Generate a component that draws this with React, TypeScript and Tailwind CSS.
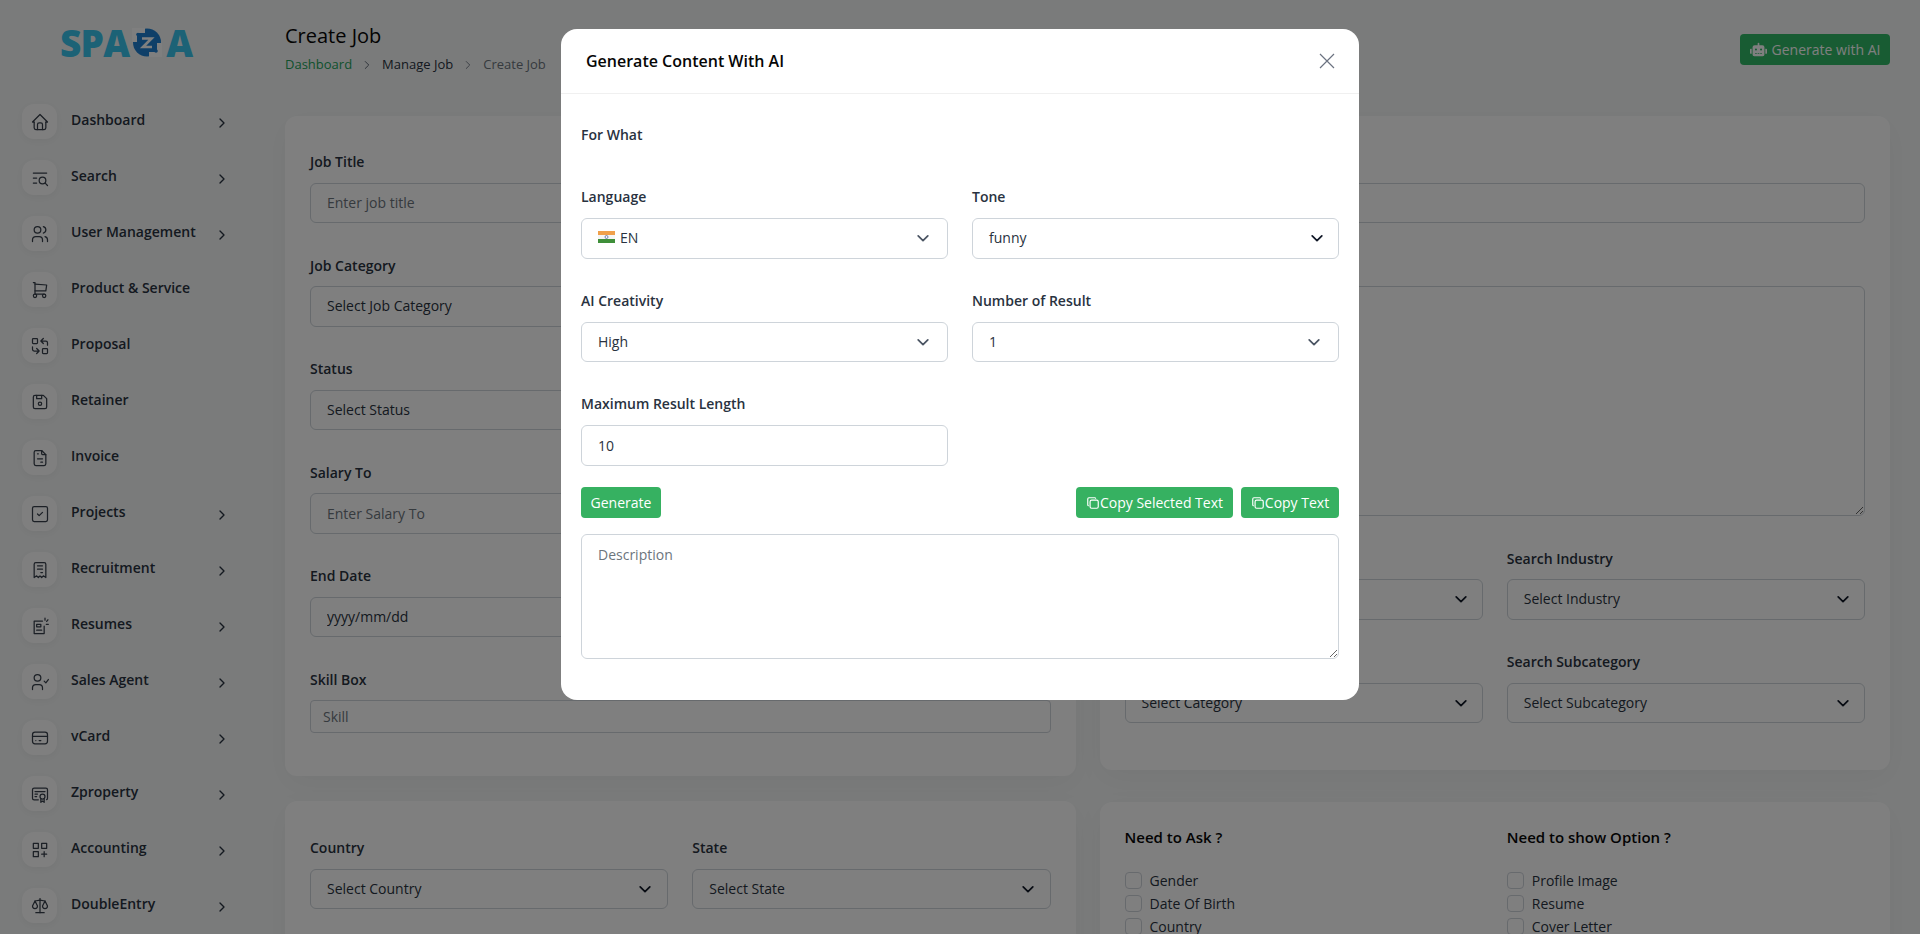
import React from "react";
import { ChevronRight } from "lucide-react";
import { FaRobot } from "react-icons/fa";
import {
  TbHome, TbListSearch, TbUsers, TbShoppingCart, TbReplace, TbDeviceFloppy, TbFileInvoice,
  TbSquareCheck, TbReceipt, TbCreditCard, TbCertificate, TbCategoryPlus, TbScale, TbCopy,
} from "react-icons/tb";

function ResumeIcon() {
  return (
    <svg width={20} height={20} viewBox="0 0 24 24" fill="none" stroke="currentColor" strokeWidth="1.500" strokeLinecap="round" strokeLinejoin="round">
      <path d="M15 6H5v15h12v-9" />
      <path d="M8 10h5v3H8zM8 17h6" />
      <path d="M18 2.500v2.500M21.500 4.500 20 6.500M22 10h-2.500" />
    </svg>
  );
}

function AgentIcon() {
  return (
    <svg width={20} height={20} viewBox="0 0 24 24" fill="none" stroke="currentColor" strokeWidth="1.500" strokeLinecap="round" strokeLinejoin="round">
      <circle cx="9" cy="7" r="4" />
      <path d="M3 21v-2a4 4 0 0 1 4-4h4a4 4 0 0 1 4 4v2" />
      <path d="m17 11 2 2 3-4" />
    </svg>
  );
}

const s = { size: 20, strokeWidth: 1.5 };

const nav: { label: string; icon: React.ReactNode; arrow: boolean }[] = [
  { label: "Dashboard", icon: <TbHome {...s} />, arrow: true },
  { label: "Search", icon: <TbListSearch {...s} />, arrow: true },
  { label: "User Management", icon: <TbUsers {...s} />, arrow: true },
  { label: "Product & Service", icon: <TbShoppingCart {...s} />, arrow: false },
  { label: "Proposal", icon: <TbReplace {...s} />, arrow: false },
  { label: "Retainer", icon: <TbDeviceFloppy {...s} />, arrow: false },
  { label: "Invoice", icon: <TbFileInvoice {...s} />, arrow: false },
  { label: "Projects", icon: <TbSquareCheck {...s} />, arrow: true },
  { label: "Recruitment", icon: <TbReceipt {...s} />, arrow: true },
  { label: "Resumes", icon: <ResumeIcon />, arrow: true },
  { label: "Sales Agent", icon: <AgentIcon />, arrow: true },
  { label: "vCard", icon: <TbCreditCard {...s} />, arrow: true },
  { label: "Zproperty", icon: <TbCertificate {...s} />, arrow: true },
  { label: "Accounting", icon: <TbCategoryPlus {...s} />, arrow: true },
  { label: "DoubleEntry", icon: <TbScale {...s} />, arrow: true },
];

function Label({ children, modal }: { children?: React.ReactNode; modal?: boolean }) {
  return (
    <div className={`h-[21px] text-sm leading-[21px] font-semibold text-[#293240] ${modal ? "mb-[11px]" : "mb-[10.5px]"}`}>
      {children}
    </div>
  );
}

function Chevron({ className }: { className: string }) {
  return (
    <svg className={`absolute top-1/2 -translate-y-1/2 ${className}`} width="14" height="14" viewBox="0 0 16 16" fill="none" stroke="currentColor" strokeWidth="2" strokeLinecap="round" strokeLinejoin="round">
      <path d="M2.500 5.500 8 11l5.500-5.500" />
    </svg>
  );
}

function SelectBox({ children, chevron = "right-[18px] text-[#343a40]" }: { children?: React.ReactNode; chevron?: string }) {
  return (
    <div className="relative flex h-[40.5px] items-center rounded-md border border-[#ced4da] bg-white px-4 text-sm text-[#293240]">
      {children}
      <Chevron className={chevron} />
    </div>
  );
}

function TextInput({ placeholder, value }: { placeholder?: string; value?: string }) {
  return (
    <input
      readOnly
      placeholder={placeholder}
      value={value ?? ""}
      className="block h-[40.5px] w-full rounded-md border border-[#ced4da] bg-white px-4 text-sm text-[#293240] outline-none placeholder:text-[#6c757d]"
    />
  );
}

function Check({ label }: { label: string }) {
  return (
    <div className="flex h-[23px] items-center">
      <span className="h-[17px] w-[17px] rounded-[4px] border border-[#ced4da] bg-white" />
      <span className="ml-2 text-sm font-medium text-[#293240]">{label}</span>
    </div>
  );
}

function Logo() {
  return (
    <div className="ml-[60px] flex h-[28px] items-center text-[37px] font-extrabold leading-none tracking-[-0.8px] text-[#38c4ec]">
      <span>SPA</span>
      <svg className="mx-[3px]" width="30" height="29" viewBox="0 0 30 29">
        <circle cx="15" cy="14.500" r="14" fill="#1f7fd0" />
        <path d="M0 0h13v5H5v9H0z" fill="#fff" />
        <path d="M30 29H17v-5h8v-9h5z" fill="#fff" />
        <path d="M10 10.500h9.500L11 19h9" fill="none" stroke="#fff" strokeWidth="2.600" />
        <path d="M6 6.500h9M15 23h9" stroke="#1f7fd0" strokeWidth="1.300" fill="none" />
        <circle cx="6" cy="6.500" r="1.800" fill="#1f7fd0" />
        <circle cx="24" cy="23" r="1.800" fill="#1f7fd0" />
      </svg>
      <span className="ml-[1px]">A</span>
    </div>
  );
}

function Sidebar() {
  return (
    <aside className="w-[285px] shrink-0 pt-[28px]">
      <Logo />
      <nav className="mt-[48px] flex flex-col gap-[21px]">
        {nav.map((n) => (
          <div key={n.label} className="ml-[22px] flex h-[35px] text-[#293240]">
            <span className="flex h-[35px] w-[35px] shrink-0 items-center justify-center rounded-xl bg-white text-[#38404c] shadow-[0_2px_10px_rgba(0,0,0,0.05)]">{n.icon}</span>
            <span className="ml-[14px] mt-[5px] h-[21px] w-[143px] text-sm font-semibold leading-[21px]">{n.label}</span>
            {n.arrow && <ChevronRight size={16} className="mt-[11px] text-[#293240]" />}
          </div>
        ))}
      </nav>
    </aside>
  );
}

function Modal() {
  const copy = <TbCopy size={14} className="shrink-0" />;
  return (
    <div className="fixed inset-0 flex items-start justify-center bg-black/50 pt-[29px]">
      <div className="h-[671px] w-[798px] overflow-hidden rounded-2xl bg-white">
        <div className="flex h-[65px] items-center justify-between border-b border-[#f0f0f0] pl-[25px] pr-[24px]">
          <h5 className="text-base font-semibold text-[#060606]">Generate Content With AI</h5>
          <svg width="16" height="16" viewBox="0 0 16 16" stroke="#6b7280" strokeWidth="1.200" fill="none">
            <path d="M1 1l14 14M15 1 1 15" />
          </svg>
        </div>
        <div className="px-5 pt-[30px]">
          <div className="mb-[41px] h-[21px] text-sm font-semibold leading-[21px] text-[#293240]">For What</div>
          <div className="grid grid-cols-2 gap-x-6 gap-y-[31px]">
            <div>
              <Label modal>Language</Label>
              <SelectBox chevron="right-[17px] text-[#4b5563]">
                <svg className="mr-[5px] -mt-[2px]" width="17" height="12" viewBox="0 0 17 12">
                  <rect width="17" height="4" fill="#f0a04b" />
                  <rect y="4" width="17" height="4" fill="#f5f5f5" />
                  <rect y="8" width="17" height="4" fill="#3f8f3a" />
                  <circle cx="8.500" cy="6" r="1.500" fill="none" stroke="#2b3f8c" strokeWidth="0.600" />
                </svg>
                EN
              </SelectBox>
            </div>
            <div>
              <Label modal>Tone</Label>
              <SelectBox chevron="right-[14px] text-[#111827]">funny</SelectBox>
            </div>
            <div>
              <Label modal>AI Creativity</Label>
              <SelectBox chevron="right-[17px] text-[#4b5563]">High</SelectBox>
            </div>
            <div>
              <Label modal>Number of Result</Label>
              <SelectBox chevron="right-[17px] text-[#4b5563]">1</SelectBox>
            </div>
            <div>
              <Label modal>Maximum Result Length</Label>
              <TextInput value="10" />
            </div>
          </div>
          <div className="mt-[21.5px] flex h-[31px] items-stretch text-sm font-medium text-white">
            <button className="w-[80px] rounded bg-[#36b161]">Generate</button>
            <div className="flex-1" />
            <button className="flex w-[157px] items-center justify-center rounded bg-[#36b161]">{copy}Copy Selected Text</button>
            <button className="ml-2 flex w-[98px] items-center justify-center rounded bg-[#36b161]">{copy}Copy Text</button>
          </div>
          <textarea
            readOnly
            placeholder="Description"
            className="mt-[16px] block h-[125px] w-full rounded-md border border-[#ced4da] px-4 py-[10px] text-sm outline-none placeholder:text-[#6c757d]"
          />
        </div>
      </div>
    </div>
  );
}

export default function App() {
  return (
    <div className="relative flex h-[934px] overflow-hidden bg-[#f5f7f7] font-['Open_Sans',sans-serif]">
      <Sidebar />
      <main className="min-w-0 flex-1 pr-[30px] pt-[21px]">
        <header className="flex h-[95px] items-start justify-between">
          <div>
            <h1 className="text-xl font-medium leading-[30px] text-[#060606]">Create Job</h1>
            <div className="mt-[3px] flex h-[21px] items-center text-[13px] leading-[21px]">
              <span className="text-[#22a35a]">Dashboard</span>
              <ChevronRight size={14} strokeWidth={1.5} className="mx-[8px] text-[#4b5563]" />
              <span className="text-[#293240]">Manage Job</span>
              <ChevronRight size={14} strokeWidth={1.5} className="mx-[8px] text-[#6b7280]" />
              <span className="text-[#6c757d]">Create Job</span>
            </div>
          </div>
          <button className="mt-[13px] flex h-[31px] w-[150px] items-center justify-center gap-[5px] rounded bg-[#30b866] text-sm font-medium text-white">
            <FaRobot size={17} />
            Generate with AI
          </button>
        </header>
        <div className="grid grid-cols-2 gap-6">
          <div>
            <section className="rounded-xl bg-white px-[25px] pb-[43.5px] pt-[35px] shadow-[0_8px_30px_rgba(0,0,0,0.04)]">
              <div className="flex flex-col gap-[31.5px]">
                <div><Label>Job Title</Label><TextInput placeholder="Enter job title" /></div>
                <div><Label>Job Category</Label><SelectBox>Select Job Category</SelectBox></div>
                <div><Label>Status</Label><SelectBox>Select Status</SelectBox></div>
                <div><Label>Salary To</Label><TextInput placeholder="Enter Salary To" /></div>
                <div><Label>End Date</Label><TextInput value="yyyy/mm/dd" /></div>
                <div>
                  <Label>Skill Box</Label>
                  <input readOnly placeholder="Skill" className="block h-[32.5px] w-full rounded border border-[#ced4da] bg-white px-3 text-sm outline-none placeholder:text-[#6c757d]" />
                </div>
              </div>
            </section>
            <section className="mt-[25px] h-[300px] rounded-xl bg-white px-[25px] pt-[36px] shadow-[0_8px_30px_rgba(0,0,0,0.04)]">
              <div className="grid grid-cols-2 gap-6">
                <div><Label>Country</Label><SelectBox chevron="right-[15px] text-[#111827]">Select Country</SelectBox></div>
                <div><Label>State</Label><SelectBox chevron="right-[15px] text-[#111827]">Select State</SelectBox></div>
              </div>
            </section>
          </div>
          <div>
            <section className="rounded-xl bg-white px-[25px] pb-[46.5px] pt-[35px] shadow-[0_8px_30px_rgba(0,0,0,0.04)]">
              <Label />
              <TextInput />
              <div className="mt-[31.5px]">
                <Label />
                <textarea readOnly className="block h-[230px] w-full rounded-md border border-[#ced4da] bg-white outline-none" />
              </div>
              <div className="mt-[31.5px] grid grid-cols-2 gap-x-6 gap-y-[31.5px]">
                <div><Label /><SelectBox chevron="right-[14px] text-[#111827]" /></div>
                <div><Label>Search Industry</Label><SelectBox chevron="right-[14px] text-[#111827]">Select Industry</SelectBox></div>
                <div><Label>Search Category</Label><SelectBox chevron="right-[14px] text-[#111827]">Select Category</SelectBox></div>
                <div><Label>Search Subcategory</Label><SelectBox chevron="right-[14px] text-[#111827]">Select Subcategory</SelectBox></div>
              </div>
            </section>
            <section className="mt-[32px] h-[300px] rounded-xl bg-white px-[25px] pt-[24px] shadow-[0_8px_30px_rgba(0,0,0,0.04)]">
              <div className="grid grid-cols-2 gap-6">
                <div>
                  <h6 className="mb-[21.5px] text-[15px] font-semibold leading-[22px] text-[#060606]">Need to Ask ?</h6>
                  <Check label="Gender" />
                  <Check label="Date Of Birth" />
                  <Check label="Country" />
                </div>
                <div>
                  <h6 className="mb-[21.5px] text-[15px] font-semibold leading-[22px] text-[#060606]">Need to show Option ?</h6>
                  <Check label="Profile Image" />
                  <Check label="Resume" />
                  <Check label="Cover Letter" />
                </div>
              </div>
            </section>
          </div>
        </div>
      </main>
      <Modal />
    </div>
  );
}
